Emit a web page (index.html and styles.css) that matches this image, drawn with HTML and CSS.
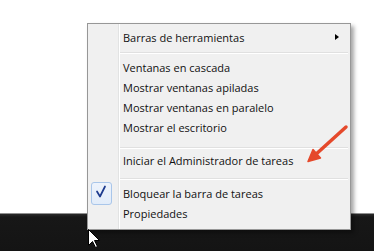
FILE: index.html
```html
<!DOCTYPE html>
<html lang="es">
<head>
<meta charset="utf-8">
<title>Menú de la barra de tareas</title>
<link rel="stylesheet" href="styles.css">
</head>
<body>
<div class="desktop"></div>
<div class="taskbar"></div>

<div class="menu">
  <div class="item"><span class="gut"></span><span class="label">Barras de herramientas</span><span class="sub"></span></div>
  <div class="sep"></div>
  <div class="item"><span class="gut"></span><span class="label">Ventanas en cascada</span></div>
  <div class="item"><span class="gut"></span><span class="label">Mostrar ventanas apiladas</span></div>
  <div class="item"><span class="gut"></span><span class="label">Mostrar ventanas en paralelo</span></div>
  <div class="item"><span class="gut"></span><span class="label">Mostrar el escritorio</span></div>
  <div class="sep sep-low"></div>
  <div class="item"><span class="gut"></span><span class="label">Iniciar el Administrador de tareas</span></div>
  <div class="sep sep-mid"></div>
  <div class="item"><span class="gut"><span class="check"><svg width="19" height="21" viewBox="0 0 19 21"><path d="M5 8.5 L8 13.5 L13 3.5" fill="none" stroke="#1d3a8e" stroke-width="1.7" stroke-linejoin="round" stroke-linecap="round"/></svg></span></span><span class="label">Bloquear la barra de tareas</span></div>
  <div class="item"><span class="gut"></span><span class="label">Propiedades</span></div>
</div>

<svg class="annot" width="374" height="251" viewBox="0 0 374 251">
  <line x1="346" y1="127" x2="314" y2="156" stroke="#e5492b" stroke-width="3.5" stroke-linecap="round"/>
  <polygon points="308,161.5 320.5,158 313,149.5" fill="#e5492b" stroke="#e5492b" stroke-width="1.5" stroke-linejoin="round"/>
</svg>

<svg class="cursor" width="13" height="20" viewBox="0 0 13 20">
  <polygon points="0.5,0.5 0.5,16.5 4.5,12.5 7.5,18.5 9.5,17.5 6.5,11.5 11.5,11.5" fill="#fff" stroke="#000" stroke-width="1" stroke-linejoin="miter"/>
</svg>
</body>
</html>
```

FILE: styles.css
```css
html, body {
  margin: 0;
  padding: 0;
}
body {
  width: 374px;
  height: 251px;
  overflow: hidden;
  position: relative;
  display: flex;
  flex-direction: column;
  background: #fff;
  font-family: "Open Sans", "Noto Sans", "Liberation Sans", sans-serif;
}
.desktop {
  height: 213px;
  flex: none;
  background: #fff;
}
.taskbar {
  flex: 1;
  border-top: 1px solid #8f8f8f;
  background: linear-gradient(#2a2a2a 0, #171717 3px, #141414 100%);
}
.menu {
  position: absolute;
  left: 87px;
  top: 23px;
  width: 264px;
  height: 207px;
  box-sizing: border-box;
  border: 1px solid #979797;
  padding: 3px 1px 6px 0;
  background:
    linear-gradient(to right, transparent 30px, #e2e3e3 30px, #e2e3e3 31px, #ffffff 31px, #ffffff 32px, transparent 32px),
    #f0f0f0;
  box-shadow: 3px 3px 4px rgba(0, 0, 0, 0.35);
  font-size: 11px;
  color: #111;
}
.item {
  height: 20px;
  display: flex;
  align-items: center;
}
.gut {
  width: 35px;
  flex: none;
  height: 20px;
  display: flex;
  align-items: center;
}
.label {
  flex: 1;
  white-space: nowrap;
}
.sub {
  width: 0;
  height: 0;
  border-left: 4px solid #000;
  border-top: 3.5px solid transparent;
  border-bottom: 3.5px solid transparent;
  margin-right: 10px;
}
.sep {
  height: 10px;
  margin-left: 32px;
  margin-right: 1px;
  box-sizing: border-box;
  padding-top: 5px;
}
.sep-low {
  height: 13px;
  padding-top: 10px;
}
.sep-mid {
  height: 13px;
  padding-top: 8px;
}
.sep::before {
  content: "";
  display: block;
  height: 1px;
  background: #e0e0e0;
  border-bottom: 1px solid #fff;
}
.check {
  margin-left: 3px;
  width: 21px;
  height: 23px;
  margin-top: -1px;
  margin-bottom: -2px;
  box-sizing: border-box;
  border: 1px solid #a9c6ea;
  border-radius: 3px;
  background: linear-gradient(#edf3fc, #e2ecf9);
  display: flex;
}
.annot {
  position: absolute;
  left: 0;
  top: 0;
  pointer-events: none;
}
.cursor {
  position: absolute;
  left: 88px;
  top: 229px;
}
```
